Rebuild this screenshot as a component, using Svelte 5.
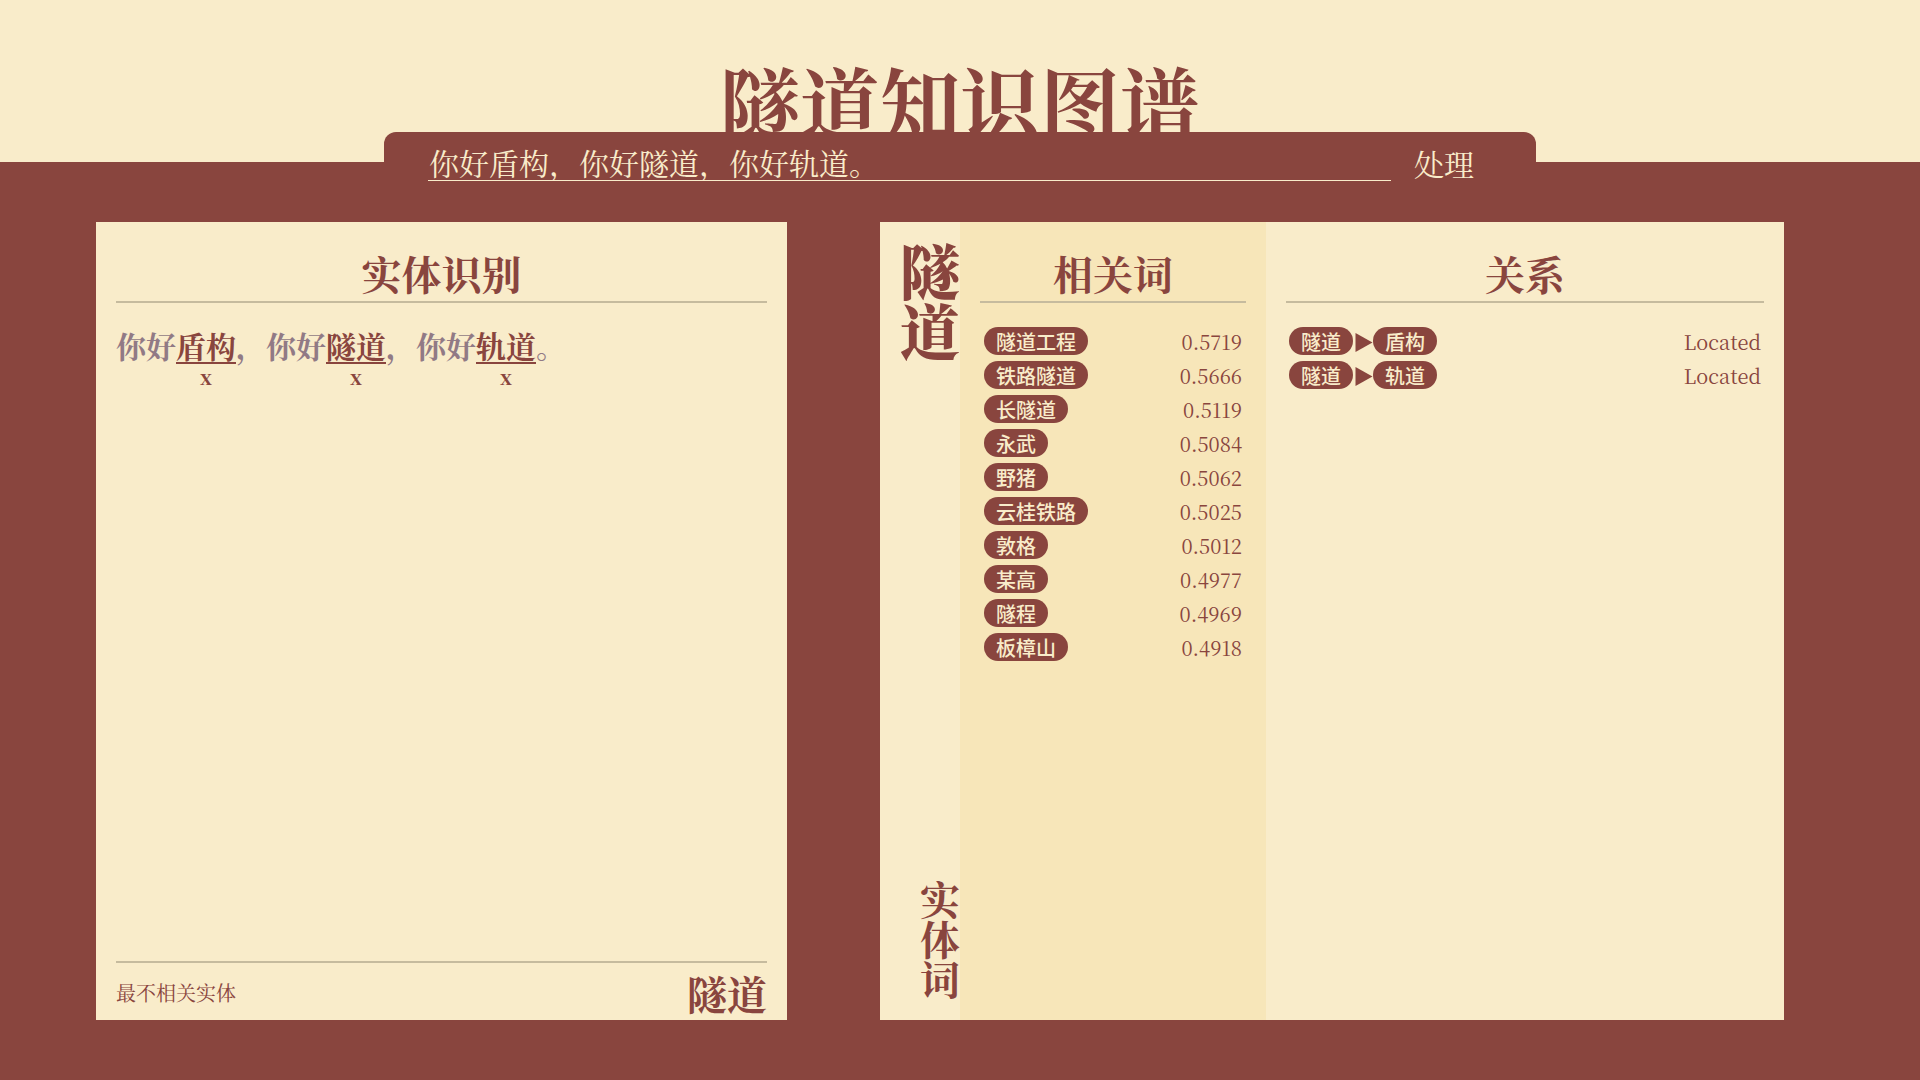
<script>
  let text = $state('你好盾构，你好隧道，你好轨道。');

  const tokens = [
    { text: '你好' },
    { text: '盾构', tag: 'x' },
    { text: '，你好' },
    { text: '隧道', tag: 'x' },
    { text: '，你好' },
    { text: '轨道', tag: 'x' },
    { text: '。' }
  ];

  const related = [
    ['隧道工程', '0.5719'],
    ['铁路隧道', '0.5666'],
    ['长隧道', '0.5119'],
    ['永武', '0.5084'],
    ['野猪', '0.5062'],
    ['云桂铁路', '0.5025'],
    ['敦格', '0.5012'],
    ['某高', '0.4977'],
    ['隧程', '0.4969'],
    ['板樟山', '0.4918']
  ];

  const relations = [
    { from: '隧道', to: '盾构', type: 'Located' },
    { from: '隧道', to: '轨道', type: 'Located' }
  ];
</script>

<div class="page" lang="zh-CN">
  <header>
    <h1>隧道知识图谱</h1>
  </header>

  <form class="bar" onsubmit={(e) => e.preventDefault()}>
    <input type="text" aria-label="文本" bind:value={text} />
    <button type="submit">处理</button>
  </form>

  <main>
    <section class="card recognition">
      <h2>实体识别</h2>
      <p class="sentence">
        {#each tokens as t}{#if t.tag}<span class="entity">{t.text}<small>{t.tag}</small></span>{:else}<span>{t.text}</span>{/if}{/each}
      </p>
      <footer>
        <span>最不相关实体</span>
        <strong>隧道</strong>
      </footer>
    </section>

    <section class="card detail">
      <div class="spine">
        <strong>隧道</strong>
        <span>实体词</span>
      </div>
      <div class="column related">
        <h2>相关词</h2>
        <table>
          <tbody>
            {#each related as [word, score]}
              <tr>
                <td><span class="pill">{word}</span></td>
                <td class="value">{score}</td>
              </tr>
            {/each}
          </tbody>
        </table>
      </div>
      <div class="column relations">
        <h2>关系</h2>
        <table>
          <tbody>
            {#each relations as r}
              <tr>
                <td>
                  <div class="link">
                    <span class="pill">{r.from}</span>
                    <svg width="20" height="28" viewBox="0 0 20 28" aria-hidden="true"><path d="M2.5 6 19.5 15.5 2.5 25z" /></svg>
                    <span class="pill">{r.to}</span>
                  </div>
                </td>
                <td class="value">{r.type}</td>
              </tr>
            {/each}
          </tbody>
        </table>
      </div>
    </section>
  </main>
</div>

<style>
  :global(body) {
    margin: 0;
    background: #89453e;
  }

  .page {
    --red: #89453e;
    --cream: #f9ecca;
    --sand: #f7e6b9;
    --rule: #c6bb9e;
    display: flex;
    flex-direction: column;
    box-sizing: border-box;
    min-height: 100vh;
    padding-bottom: 60px;
    background: var(--red);
    color: var(--red);
    font-family: 'Noto Serif CJK SC', 'Noto Serif SC', serif;
    font-size: 20px;
  }

  header {
    box-sizing: border-box;
    height: 15vh;
    padding-top: 61px;
    background: var(--cream);
    overflow: hidden;
  }

  h1 {
    margin: 0;
    font-size: 80px;
    line-height: 80px;
    font-weight: 700;
    text-align: center;
  }

  .bar {
    position: relative;
    display: flex;
    align-items: flex-start;
    box-sizing: border-box;
    width: 60%;
    height: 60px;
    margin: -30px auto 30px;
    padding: 9px 44px 0;
    border-radius: 12px 12px 0 0;
    background: var(--red);
  }

  .bar input,
  .bar button {
    box-sizing: border-box;
    height: 40px;
    margin: 0;
    border: 0;
    background: none;
    color: var(--cream);
    font-family: inherit;
    font-size: 30px;
    line-height: 38px;
  }

  .bar input {
    flex: 1;
    min-width: 0;
    padding: 3px 1px 0;
    border-bottom: 1px solid var(--cream);
    border-radius: 0;
    outline: none;
  }

  .bar button {
    width: 101px;
    padding: 3px 18px 0 23px;
    text-align: left;
    cursor: pointer;
  }

  main {
    display: grid;
    flex: 1;
    grid-template-columns: minmax(0, 691fr) minmax(0, 904fr);
    gap: 93px;
    padding: 0 136px 0 96px;
  }

  .card {
    box-sizing: border-box;
    background: var(--cream);
  }

  h2 {
    margin: 0 0 20px;
    padding: 3px 0 0;
    border-bottom: 2px solid var(--rule);
    font-size: 40px;
    line-height: 56px;
    font-weight: 700;
    text-align: center;
  }

  .recognition {
    display: flex;
    flex-direction: column;
    padding: 20px 20px 0;
  }

  .sentence {
    flex: 1;
    margin: 0;
    color: #917a85;
    font-size: 30px;
    line-height: 44px;
    font-weight: 700;
  }

  .entity {
    position: relative;
    display: inline-block;
    height: 39px;
    border-bottom: 2px solid var(--red);
    color: var(--red);
    vertical-align: top;
  }

  .entity small {
    position: absolute;
    top: 39px;
    left: 0;
    width: 100%;
    font-size: 20px;
    line-height: 30px;
    text-align: center;
  }

  footer {
    display: flex;
    align-items: center;
    justify-content: space-between;
    box-sizing: border-box;
    height: 59px;
    padding-top: 2px;
    border-top: 2px solid var(--rule);
  }

  footer strong {
    font-size: 40px;
    line-height: 56px;
    font-weight: 700;
  }

  .detail {
    display: grid;
    grid-template-columns: 80px minmax(0, 306fr) minmax(0, 518fr);
  }

  .spine {
    display: flex;
    flex-direction: column;
    align-items: flex-end;
    justify-content: space-between;
    padding: 17px 0 22px;
    font-weight: 700;
  }

  .spine strong {
    width: 60px;
    font-size: 60px;
    line-height: 60px;
  }

  .spine span {
    width: 40px;
    font-size: 40px;
    line-height: 40px;
  }

  .column {
    padding: 20px;
  }

  .related {
    background: var(--sand);
  }

  table {
    width: 100%;
    border-collapse: separate;
    border-spacing: 2px;
  }

  td {
    height: 32px;
    padding: 0 2px;
  }

  .relations td {
    padding: 0 1px;
  }

  td.value,
  .relations td.value {
    box-sizing: border-box;
    padding-top: 2px;
    text-align: right;
    line-height: 30px;
  }

  .pill {
    display: inline-block;
    padding: 2px 12px 0;
    border-radius: 14px;
    background: var(--red);
    color: var(--cream);
    font-family: 'Noto Sans CJK SC', sans-serif;
    line-height: 26px;
    font-weight: 500;
    vertical-align: top;
  }

  .link {
    display: flex;
  }

  .link svg {
    fill: var(--red);
  }
</style>
